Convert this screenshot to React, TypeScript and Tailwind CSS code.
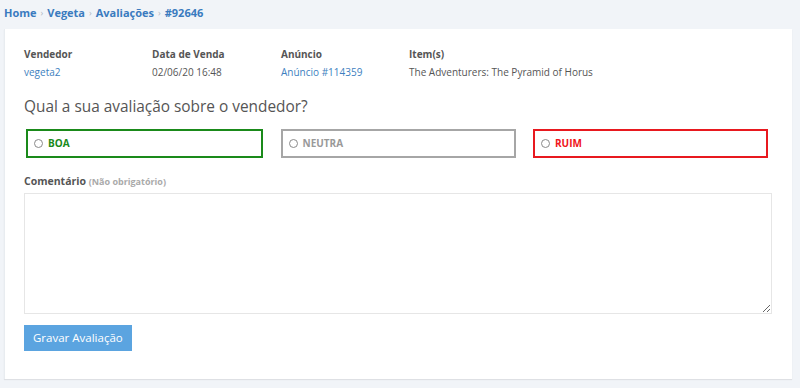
const options = [
  { label: 'BOA', box: 'border-[#1a8a1a]', text: 'text-[#1a8a1a]' },
  { label: 'NEUTRA', box: 'border-[#a6a6a6]', text: 'text-[#999999]' },
  { label: 'RUIM', box: 'border-[#e8191f]', text: 'text-[#f0141a]' },
];

export default function App() {
  return (
    <div className="min-h-[388px] bg-[#f1f4f8] px-1 pb-2 font-['Open_Sans',sans-serif]">
      {/* breadcrumb */}
      <div className="flex h-[29px] items-center pb-[3px] text-[11px] font-bold text-[#3a7bbf]">
        <span>Home</span>
        <span className="mx-[4px] text-[9px] font-normal text-[#b0b8c2]">›</span>
        <span>Vegeta</span>
        <span className="mx-[4px] text-[9px] font-normal text-[#b0b8c2]">›</span>
        <span>Avaliações</span>
        <span className="mx-[4px] text-[9px] font-normal text-[#b0b8c2]">›</span>
        <span>#92646</span>
      </div>

      <div className="w-[788px] border-l border-[#e8ecf0] bg-white pl-[19px] pr-5 pt-[16px] pb-[28px] shadow-[0_1px_1px_rgba(0,0,0,0.08)]">
        <div className="grid grid-cols-[128px_129px_128px_1fr] text-[10px] leading-[18px]">
          <div>
            <div className="font-bold text-[#555]">Vendedor</div>
            <div className="text-[#3d7fc0]">vegeta2</div>
          </div>
          <div>
            <div className="font-bold text-[#555]">Data de Venda</div>
            <div className="text-[#555]">02/06/20 16:48</div>
          </div>
          <div>
            <div className="font-bold text-[#555]">Anúncio</div>
            <div className="text-[#3d7fc0]">Anúncio #114359</div>
          </div>
          <div>
            <div className="font-bold text-[#555]">Item(s)</div>
            <div className="text-[#555]">The Adventurers: The Pyramid of Horus</div>
          </div>
        </div>

        <h2 className="mt-[15px] text-[15.4px] leading-[22px] text-[#555]">
          Qual a sua avaliação sobre o vendedor?
        </h2>

        <div className="mt-[11px] grid grid-cols-[237px_235px_235px] gap-x-[17.5px] pl-[2px]">
          {options.map((o) => (
            <label
              key={o.label}
              className={`flex h-[29px] items-center gap-[5px] border-2 ${o.box} px-[6px] text-[10px] font-bold ${o.text}`}
            >
              <span className="h-[9px] w-[9px] rounded-full border border-[#8a8a8a] bg-white" />
              {o.label}
            </label>
          ))}
        </div>

        <div className="mt-[16px] text-[10.5px] font-bold text-[#555]">
          Comentário <span className="text-[9px] text-[#aaa]">(Não obrigatório)</span>
        </div>
        <textarea className="mt-[3px] block h-[121px] w-[748px] border border-[#e6e6e6] outline-none" />

        <button className="mt-[11px] h-[26px] bg-[#5ba4e0] px-[9px] text-[11.5px] text-white">
          Gravar Avaliação
        </button>
      </div>
    </div>
  );
}
